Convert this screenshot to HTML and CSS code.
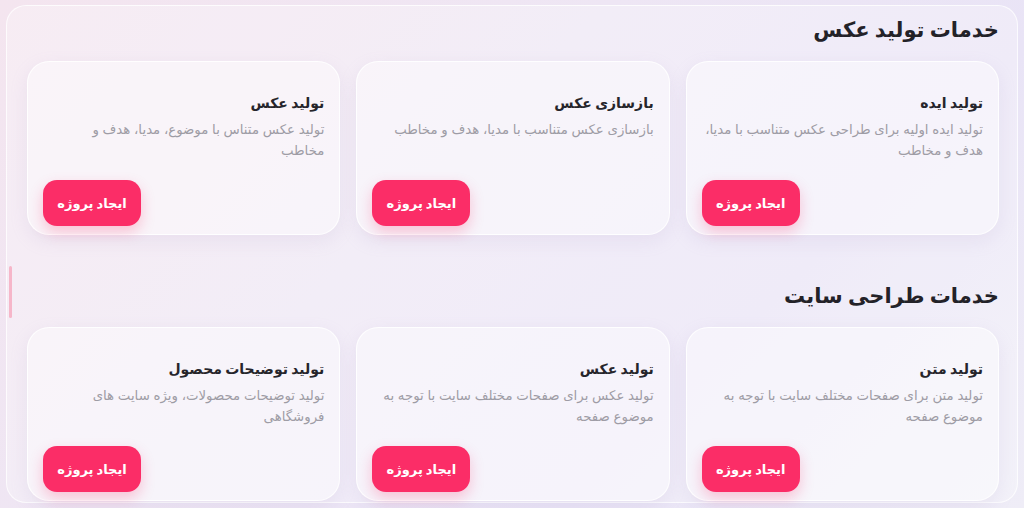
FILE: index.html
```html
<!DOCTYPE html>
<html lang="fa" dir="rtl">
<head>
<meta charset="utf-8">
<title>خدمات</title>
<link rel="stylesheet" href="styles.css">
</head>
<body>
<div class="panel">
  <span class="thumb"></span>
  <section class="group">
    <h2 class="group-title">خدمات تولید عکس</h2>
    <div class="grid">
      <div class="card">
        <h3 class="card-title">تولید ایده</h3>
        <p class="card-desc">تولید ایده اولیه برای طراحی عکس متناسب با مدیا، هدف و مخاطب</p>
        <button class="btn">ایجاد پروژه</button>
      </div>
      <div class="card">
        <h3 class="card-title">بازسازی عکس</h3>
        <p class="card-desc">بازسازی عکس متناسب با مدیا، هدف و مخاطب</p>
        <button class="btn">ایجاد پروژه</button>
      </div>
      <div class="card">
        <h3 class="card-title">تولید عکس</h3>
        <p class="card-desc">تولید عکس متناس با موضوع، مدیا، هدف و<br>مخاطب</p>
        <button class="btn">ایجاد پروژه</button>
      </div>
    </div>
  </section>
  <section class="group">
    <h2 class="group-title">خدمات طراحی سایت</h2>
    <div class="grid">
      <div class="card">
        <h3 class="card-title">تولید متن</h3>
        <p class="card-desc">تولید متن برای صفحات مختلف سایت با توجه به موضوع صفحه</p>
        <button class="btn">ایجاد پروژه</button>
      </div>
      <div class="card">
        <h3 class="card-title">تولید عکس</h3>
        <p class="card-desc">تولید عکس برای صفحات مختلف سایت با توجه به موضوع صفحه</p>
        <button class="btn">ایجاد پروژه</button>
      </div>
      <div class="card">
        <h3 class="card-title">تولید توضیحات محصول</h3>
        <p class="card-desc">تولید توضیحات محصولات، ویژه سایت های فروشگاهی</p>
        <button class="btn">ایجاد پروژه</button>
      </div>
    </div>
  </section>
</div>
</body>
</html>
```

FILE: styles.css
```css
html, body {
  margin: 0;
  padding: 0;
  height: 100%;
}
body {
  font-family: Inter, "DejaVu Sans", sans-serif;
  background: linear-gradient(135deg, #f4e5ef 0%, #eee6f4 40%, #e9e4f6 70%, #efedf7 100%);
  overflow: hidden;
}
.panel {
  position: relative;
  margin: 5px 6px 0 6px;
  height: 498px;
  box-sizing: border-box;
  padding: 10px 18px 0 20px;
  border-radius: 20px;
  border: 1px solid rgba(255, 255, 255, 0.75);
  background: rgba(255, 255, 255, 0.28);
  display: flex;
  flex-direction: column;
  gap: 47px;
}
.thumb {
  position: absolute;
  left: 2px;
  top: 260px;
  width: 3px;
  height: 52px;
  border-radius: 2px;
  background: #f6b6c9;
}
.group-title {
  margin: 0 0 17px 0;
  font-size: 21px;
  line-height: 28px;
  font-weight: 600;
  color: #232228;
}
.grid {
  display: grid;
  grid-template-columns: repeat(3, 1fr);
  gap: 16px;
}
.card {
  height: 174px;
  box-sizing: border-box;
  padding: 31px 15px 8px 15px;
  border-radius: 22px;
  background: rgba(255, 255, 255, 0.42);
  border: 1px solid rgba(255, 255, 255, 0.85);
  box-shadow: 0 6px 18px rgba(170, 150, 200, 0.14);
  display: flex;
  flex-direction: column;
  align-items: flex-start;
}
.card-title {
  margin: 0;
  font-size: 14px;
  line-height: 20px;
  font-weight: 700;
  color: #26252b;
}
.card-desc {
  margin: 6px 0 0 0;
  font-size: 13.3px;
  line-height: 21px;
  color: #9e9ca5;
}
.btn {
  margin-top: auto;
  align-self: flex-end;
  width: 98px;
  height: 46px;
  border: none;
  border-radius: 14px;
  background: #fb2d67;
  color: #ffffff;
  font-family: inherit;
  font-size: 13px;
  font-weight: 700;
  box-shadow: 0 6px 14px rgba(251, 45, 103, 0.25);
  cursor: pointer;
}
```
